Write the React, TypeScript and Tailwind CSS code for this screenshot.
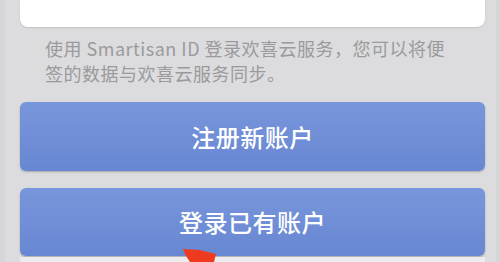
export default function App() {
  return (
    <div
      className="relative w-[500px] h-[262px] overflow-hidden bg-[#dcdcde] flex"
      style={{ fontFamily: '"Noto Sans CJK SC", "Noto Sans", sans-serif' }}
    >
      <div className="w-[5px] bg-[#d6d6d8]" />
      <div className="flex-1 flex flex-col pl-[15px] pr-[11px]">
        <div className="h-[27px] bg-white rounded-b-[8px] shadow-[0_1px_2px_rgba(0,0,0,0.12)]" />
        <p className="mt-[9px] pl-[25px] pr-[32px] text-[18px] leading-[25px] tracking-[0.5px] text-[#9a9a9c]">
          使用 Smartisan ID 登录欢喜云服务，您可以将便签的数据与欢喜云服务同步。
        </p>
        <div className="mt-[16px] flex flex-col gap-[17px]">
          <button className="h-[69px] w-full rounded-[6px] bg-gradient-to-b from-[#7896db] to-[#6887d2] shadow-[0_1px_2px_rgba(0,0,0,0.25)] text-white text-[24px] font-medium tracking-[0.5px]">
            注册新账户
          </button>
          <button className="h-[68px] w-full rounded-[6px] bg-gradient-to-b from-[#7896db] to-[#6887d2] shadow-[0_1px_2px_rgba(0,0,0,0.25)] text-white text-[24px] font-medium tracking-[0.5px]">
            登录已有账户
          </button>
        </div>
        <div className="flex-1 bg-[#ececee] mt-[1px]" />
      </div>
      <div className="w-[4px] bg-[#d6d6d8]" />
      <svg
        className="absolute left-0 top-0"
        width="500"
        height="262"
        viewBox="0 0 500 262"
      >
        <polygon
          points="183,249 200,250 216,254 214,262 190,262 186,256"
          fill="#ee3b1f"
        />
      </svg>
    </div>
  );
}
